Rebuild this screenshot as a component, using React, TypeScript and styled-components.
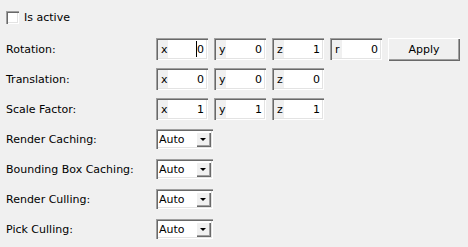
import React from "react";
import styled, { createGlobalStyle } from "styled-components";

const Global = createGlobalStyle`
  html, body { margin: 0; padding: 0; background: #f0f0f0; }
  body { font-family: Tahoma, "DejaVu Sans", sans-serif; font-size: 11px; color: #000; }
`;

const sunken = `inset 1px 1px 0 #a0a0a0, inset 2px 2px 0 #696969, inset -1px -1px 0 #fff, inset -2px -2px 0 #e3e3e3`;
const raised = `inset 1px 1px 0 #fff, inset -1px -1px 0 #696969, inset -2px -2px 0 #a0a0a0`;

const Page = styled.div`
  width: 468px;
  height: 247px;
  padding: 9px 0 0 6px;
  box-sizing: border-box;
  display: flex;
  flex-direction: column;
`;

const CheckRow = styled.label`
  display: flex;
  align-items: center;
  gap: 5px;
  height: 16px;
`;

const Box = styled.span`
  width: 13px;
  height: 13px;
  box-sizing: border-box;
  background: #fff;
  box-shadow: ${sunken};
`;

const Form = styled.div`
  display: grid;
  grid-template-columns: 150px 1fr;
  grid-auto-rows: 30px;
  margin-top: 9px;
  align-items: center;
`;

const Label = styled.div`
  white-space: nowrap;
`;

const Controls = styled.div`
  display: flex;
  gap: 6px;
  align-items: center;
`;

const Spin = styled.div`
  position: relative;
  width: 52px;
  height: 22px;
  box-sizing: border-box;
  display: flex;
  align-items: stretch;
  background: #fff;
  box-shadow: ${sunken};
  padding: 2px 4px 2px 2px;
`;

const Axis = styled.span`
  width: 10px;
  background: #f0f0f0;
  display: flex;
  align-items: center;
  padding-left: 3px;
  box-sizing: border-box;
`;

const Value = styled.span`
  flex: 1;
  display: flex;
  align-items: center;
  justify-content: flex-end;
`;

const Caret = styled.span`
  position: absolute;
  right: 11px;
  top: 3px;
  width: 1px;
  height: 16px;
  background: #000;
`;

const Button = styled.button`
  width: 72px;
  height: 23px;
  margin-top: 1px;
  font: inherit;
  color: #000;
  background: #f0f0f0;
  border: none;
  padding: 0;
  box-shadow: ${raised};
`;

const Combo = styled.div`
  width: 57px;
  height: 20px;
  box-sizing: border-box;
  background: #fff;
  display: flex;
  align-items: center;
  padding: 2px 2px 2px 3px;
  box-shadow: ${sunken};
`;

const ComboText = styled.span`
  flex: 1;
`;

const Arrow = styled.span`
  width: 15px;
  height: 15px;
  margin-top: 1px;
  box-sizing: border-box;
  background: #f0f0f0;
  display: flex;
  align-items: center;
  justify-content: center;
  box-shadow: ${raised};
  &::after {
    content: "";
    border-left: 3px solid transparent;
    border-right: 3px solid transparent;
    border-top: 3px solid #000;
    margin: 0 1px 0 0;
  }
`;

const SpinBox = ({ axis, value, caret }: { axis: string; value: string; caret?: boolean }) => (
  <Spin>
    <Axis>{axis}</Axis>
    <Value>{value}</Value>
    {caret && <Caret />}
  </Spin>
);

const ComboBox = () => (
  <Combo>
    <ComboText>Auto</ComboText>
    <Arrow />
  </Combo>
);

export default function App() {
  return (
    <>
      <Global />
      <Page>
        <CheckRow>
          <Box />
          Is active
        </CheckRow>
        <Form>
          <Label>Rotation:</Label>
          <Controls>
            <SpinBox axis="x" value="0" caret />
            <SpinBox axis="y" value="0" />
            <SpinBox axis="z" value="1" />
            <SpinBox axis="r" value="0" />
            <Button>Apply</Button>
          </Controls>
          <Label>Translation:</Label>
          <Controls>
            <SpinBox axis="x" value="0" />
            <SpinBox axis="y" value="0" />
            <SpinBox axis="z" value="0" />
          </Controls>
          <Label>Scale Factor:</Label>
          <Controls>
            <SpinBox axis="x" value="1" />
            <SpinBox axis="y" value="1" />
            <SpinBox axis="z" value="1" />
          </Controls>
          <Label>Render Caching:</Label>
          <Controls><ComboBox /></Controls>
          <Label>Bounding Box Caching:</Label>
          <Controls><ComboBox /></Controls>
          <Label>Render Culling:</Label>
          <Controls><ComboBox /></Controls>
          <Label>Pick Culling:</Label>
          <Controls><ComboBox /></Controls>
        </Form>
      </Page>
    </>
  );
}
